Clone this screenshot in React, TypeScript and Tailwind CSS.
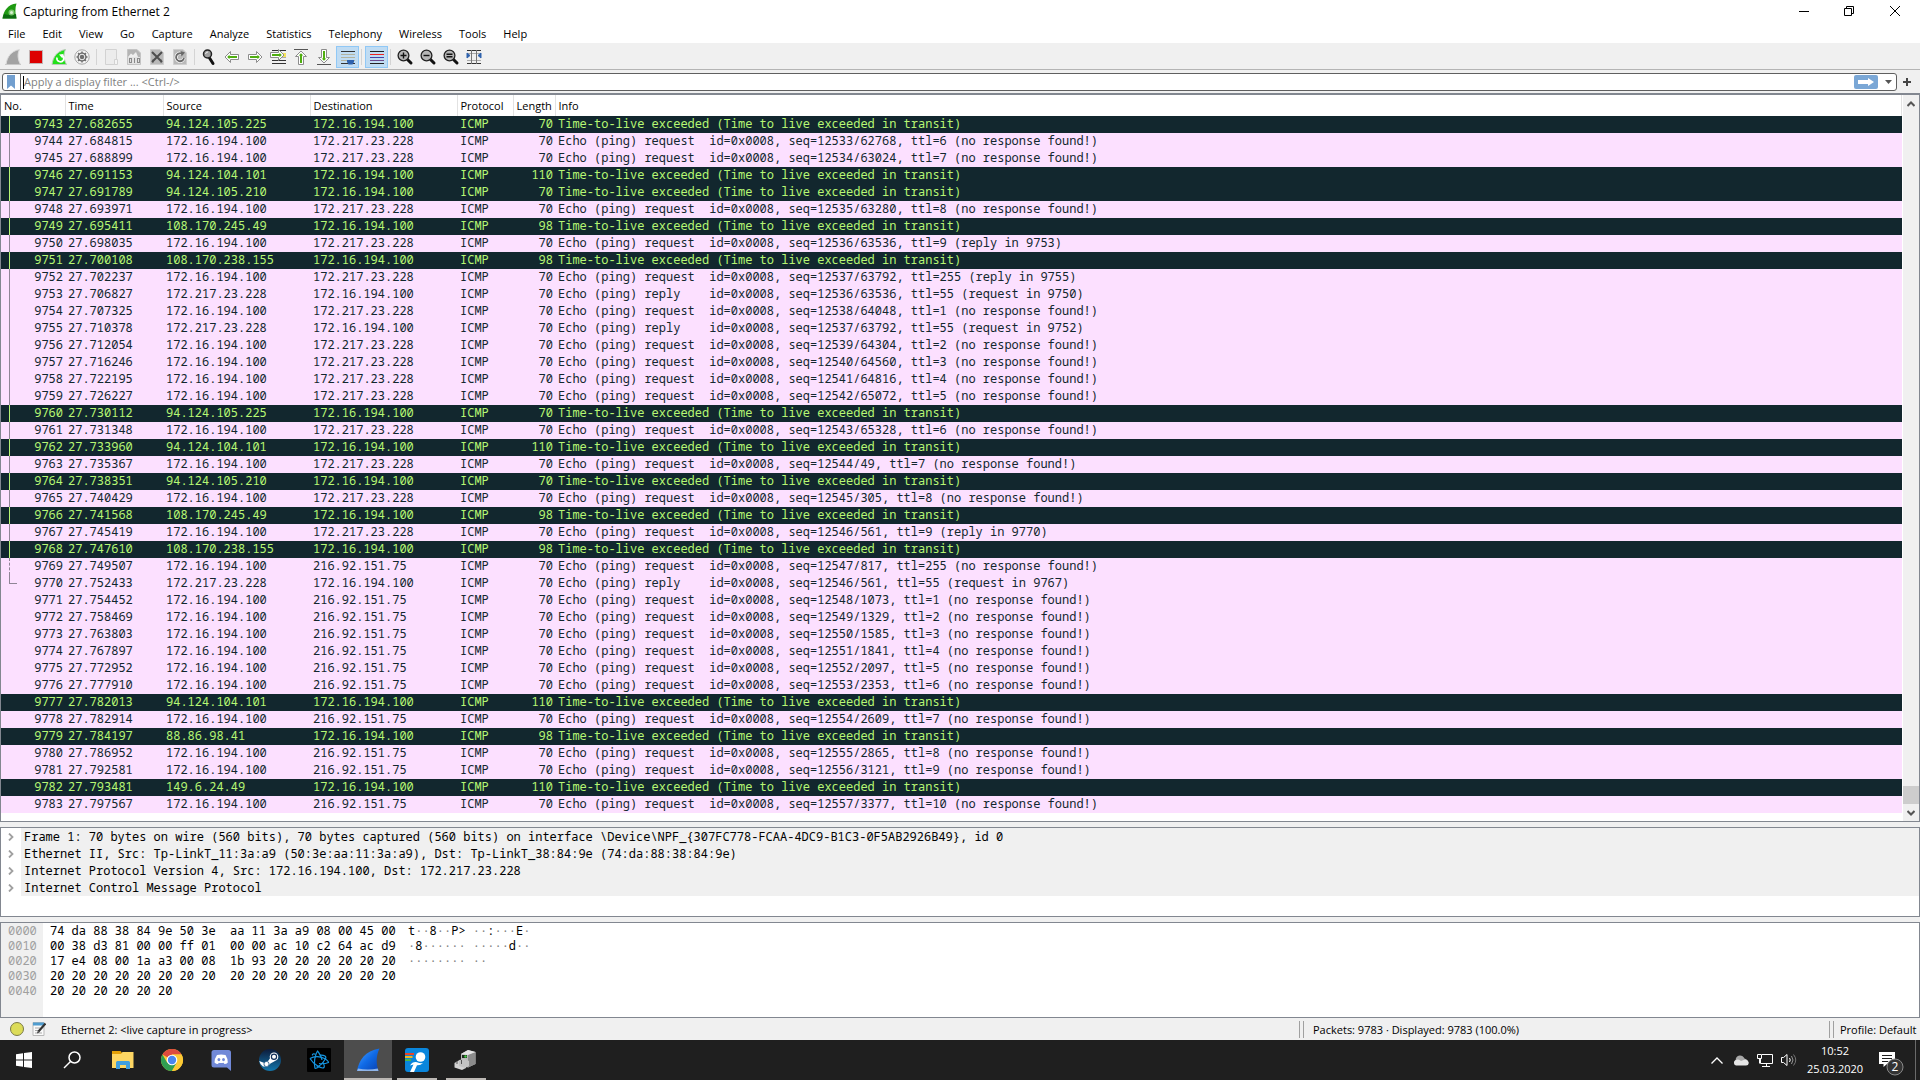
import type { ReactNode } from "react";

type Packet = {
  no: number;
  time: string;
  src: string;
  dst: string;
  len: number;
  info: string;
};

const LOCAL = "172.16.194.100";
const GOOGLE = "172.217.23.228";
const REMOTE = "216.92.151.75";

const expired = (no: number, time: string, src: string, len: number): Packet => ({
  no,
  time,
  src,
  dst: LOCAL,
  len,
  info: "Time-to-live exceeded (Time to live exceeded in transit)",
});

const request = (
  no: number,
  time: string,
  dst: string,
  seq: string,
  ttl: number,
  note = "no response found!",
): Packet => ({
  no,
  time,
  src: LOCAL,
  dst,
  len: 70,
  info: `Echo (ping) request  id=0x0008, seq=${seq}, ttl=${ttl} (${note})`,
});

const reply = (no: number, time: string, seq: string, to: number): Packet => ({
  no,
  time,
  src: GOOGLE,
  dst: LOCAL,
  len: 70,
  info: `Echo (ping) reply    id=0x0008, seq=${seq}, ttl=55 (request in ${to})`,
});

const packets: Packet[] = [
  expired(9743, "27.682655", "94.124.105.225", 70),
  request(9744, "27.684815", GOOGLE, "12533/62768", 6),
  request(9745, "27.688899", GOOGLE, "12534/63024", 7),
  expired(9746, "27.691153", "94.124.104.101", 110),
  expired(9747, "27.691789", "94.124.105.210", 70),
  request(9748, "27.693971", GOOGLE, "12535/63280", 8),
  expired(9749, "27.695411", "108.170.245.49", 98),
  request(9750, "27.698035", GOOGLE, "12536/63536", 9, "reply in 9753"),
  expired(9751, "27.700108", "108.170.238.155", 98),
  request(9752, "27.702237", GOOGLE, "12537/63792", 255, "reply in 9755"),
  reply(9753, "27.706827", "12536/63536", 9750),
  request(9754, "27.707325", GOOGLE, "12538/64048", 1),
  reply(9755, "27.710378", "12537/63792", 9752),
  request(9756, "27.712054", GOOGLE, "12539/64304", 2),
  request(9757, "27.716246", GOOGLE, "12540/64560", 3),
  request(9758, "27.722195", GOOGLE, "12541/64816", 4),
  request(9759, "27.726227", GOOGLE, "12542/65072", 5),
  expired(9760, "27.730112", "94.124.105.225", 70),
  request(9761, "27.731348", GOOGLE, "12543/65328", 6),
  expired(9762, "27.733960", "94.124.104.101", 110),
  request(9763, "27.735367", GOOGLE, "12544/49", 7),
  expired(9764, "27.738351", "94.124.105.210", 70),
  request(9765, "27.740429", GOOGLE, "12545/305", 8),
  expired(9766, "27.741568", "108.170.245.49", 98),
  request(9767, "27.745419", GOOGLE, "12546/561", 9, "reply in 9770"),
  expired(9768, "27.747610", "108.170.238.155", 98),
  request(9769, "27.749507", REMOTE, "12547/817", 255),
  reply(9770, "27.752433", "12546/561", 9767),
  request(9771, "27.754452", REMOTE, "12548/1073", 1),
  request(9772, "27.758469", REMOTE, "12549/1329", 2),
  request(9773, "27.763803", REMOTE, "12550/1585", 3),
  request(9774, "27.767897", REMOTE, "12551/1841", 4),
  request(9775, "27.772952", REMOTE, "12552/2097", 5),
  request(9776, "27.777910", REMOTE, "12553/2353", 6),
  expired(9777, "27.782013", "94.124.104.101", 110),
  request(9778, "27.782914", REMOTE, "12554/2609", 7),
  expired(9779, "27.784197", "88.86.98.41", 98),
  request(9780, "27.786952", REMOTE, "12555/2865", 8),
  request(9781, "27.792581", REMOTE, "12556/3121", 9),
  expired(9782, "27.793481", "149.6.24.49", 110),
  request(9783, "27.797567", REMOTE, "12557/3377", 10),
];

const menus = [
  "File", "Edit", "View", "Go", "Capture", "Analyze",
  "Statistics", "Telephony", "Wireless", "Tools", "Help",
];

const details = [
  "Frame 1: 70 bytes on wire (560 bits), 70 bytes captured (560 bits) on interface \\Device\\NPF_{307FC778-FCAA-4DC9-B1C3-0F5AB2926B49}, id 0",
  "Ethernet II, Src: Tp-LinkT_11:3a:a9 (50:3e:aa:11:3a:a9), Dst: Tp-LinkT_38:84:9e (74:da:88:38:84:9e)",
  "Internet Protocol Version 4, Src: 172.16.194.100, Dst: 172.217.23.228",
  "Internet Control Message Protocol",
];

const hexRows = [
  ["0000", "74 da 88 38 84 9e 50 3e  aa 11 3a a9 08 00 45 00", "t··8··P> ··:···E·"],
  ["0010", "00 38 d3 81 00 00 ff 01  00 00 ac 10 c2 64 ac d9", "·8······ ·····d··"],
  ["0020", "17 e4 08 00 1a a3 00 08  1b 93 20 20 20 20 20 20", "········ ··"],
  ["0030", "20 20 20 20 20 20 20 20  20 20 20 20 20 20 20 20", ""],
  ["0040", "20 20 20 20 20 20", ""],
];

/* ---------- toolbar icons ---------- */

const Icon = ({ children }: { children: ReactNode }) => (
  <svg viewBox="0 0 17 16" className="h-4 w-[17px] shrink-0 overflow-visible" fill="none" aria-hidden="true">
    {children}
  </svg>
);

const FIN = "M1 15.5C2 8 6 2 14.5.5C12 5 13 11 15.5 15.5Z";

const AppIcon = () => (
  <svg viewBox="0 0 16 16" className="size-4" aria-hidden="true">
    <path d="M.5 15.5C1.500 8 6 1 14.500.5C13 5 13 11 14.500 15.500Z" fill="#1f9a12" />
    <path d="M.5 15.500L2 11Q8 13 14 11L14.500 15.500Z" fill="#0c6c10" />
    <circle cx="9.500" cy="9.500" r="3" fill="#7cc76f" />
    <circle cx="9.500" cy="9.500" r="1.500" fill="#d9f2d3" />
  </svg>
);

const FinGray = () => (
  <Icon>
    <path d={FIN} fill="#a3a3a3" stroke="#dcdcdc" />
    <path d="M0 15.500H16" stroke="#c8c8c8" />
  </Icon>
);
const Stop = () => (
  <Icon>
    <rect x="1.500" y="1.500" width="13" height="13" fill="#dd0000" stroke="#c4b4b4" />
  </Icon>
);
const FinRestart = () => (
  <Icon>
    <path d={FIN} fill="#22e01a" stroke="#b9c9b9" />
    <path d="M11.500 6.500A3.500 3.500 0 1 1 6 8.500" stroke="#fff" strokeWidth="1.600" />
    <path d="M8 5.500L12.500 5L11.500 9.500Z" fill="#fff" />
  </Icon>
);
const Gear = () => (
  <Icon>
    <circle cx="8" cy="8" r="7.200" fill="#f4f4f4" stroke="#a8a8a8" />
    <circle cx="8" cy="8" r="4.600" fill="#6f6f6f" />
    <path d="M8 2.500V13.500M2.500 8H13.500M4.100 4.100L11.900 11.900M11.900 4.100L4.100 11.900" stroke="#6f6f6f" strokeWidth="1.500" />
    <circle cx="8" cy="8" r="2.800" stroke="#f4f4f4" />
  </Icon>
);
const FileBlank = () => (
  <Icon>
    <path d="M2.500.5H13.500V10.500V15.500H2.500Z" fill="#ececec" stroke="#d2d2d2" />
    <path d="M11.500 10.500H14.500V15.500H11.500Z" fill="#f4f4f4" stroke="#d2d2d2" />
  </Icon>
);
const FileSave = () => (
  <Icon>
    <path d="M1.500.5H11L14.500 4V15.500H1.500Z" fill="#b4b4b4" stroke="#c4c4c4" />
    <path d="M2 8L5 4.500L7 6L10 3L12 8Z" fill="#eee" />
    <rect x="2" y="8" width="12" height="7" fill="#e2e2e2" />
    <rect x="3.500" y="9.500" width="2" height="4" stroke="#8a8a8a" />
    <path d="M8.500 9V14" stroke="#8a8a8a" />
    <rect x="11.500" y="9.500" width="2" height="4" stroke="#8a8a8a" />
  </Icon>
);
const FileClose = () => (
  <Icon>
    <path d="M1.500.5H11L14.500 4V15.500H1.500Z" fill="#b9b9b9" stroke="#cfcfcf" />
    <path d="M3 10h2v4H3zM11 10h2v4h-2z" fill="#9a9a9a" />
    <path d="M3 3L13 13M13 3L3 13" stroke="#4e4e4e" strokeWidth="2" />
  </Icon>
);
const FileReload = () => (
  <Icon>
    <path d="M1.500.5H11L14.500 4V15.500H1.500Z" fill="#b9b9b9" stroke="#cfcfcf" />
    <path d="M12 9A4 4 0 1 1 9.500 4.500" stroke="#fff" strokeWidth="3.200" />
    <path d="M12 9A4 4 0 1 1 9.500 4.500" stroke="#696969" strokeWidth="1.800" />
    <path d="M8.500 2L13 3.500L9.500 7.500Z" fill="#696969" />
  </Icon>
);
const Find = () => (
  <Icon>
    <path d="M8.500 9L12 14.500" stroke="#111" strokeWidth="3" strokeLinecap="round" />
    <circle cx="6.500" cy="5" r="4" fill="#9f9f9f" stroke="#222" strokeWidth="1.500" />
    <path d="M4.500 5A2.500 2.500 0 0 1 7 3" stroke="#eee" />
  </Icon>
);
const Arrow = ({ transform }: { transform?: string }) => (
  <g transform={transform}>
    <path d="M1 8L6.500 2.500V5.500H14.500V10.500H6.500V13.500Z" fill="#fff" stroke="#8c8c8c" strokeLinejoin="round" />
    <path d="M3.200 8L5.500 5.700V7H13V9H5.500V10.300Z" fill="#4fae10" />
  </g>
);
const GoBack = () => (
  <Icon>
    <Arrow />
  </Icon>
);
const GoForward = () => (
  <Icon>
    <Arrow transform="rotate(180 8 8)" />
  </Icon>
);
const GoTo = () => (
  <Icon>
    <path d="M2 1.500H16M2 11.500H16M2 14.500H16" stroke="#333" />
    <rect x="13" y="4" width="3" height="4" fill="#f6e45c" />
    <path d="M2 8.500H16" stroke="#aaa" />
    <g transform="translate(-1 -2)">
      <Arrow transform="rotate(180 8 8)" />
    </g>
  </Icon>
);
const GoTop = () => (
  <Icon>
    <path d="M1 .5H15" stroke="#555" />
    <Arrow transform="translate(0 1) rotate(90 8 8)" />
  </Icon>
);
const GoBottom = () => (
  <Icon>
    <path d="M1 15.500H15" stroke="#555" />
    <Arrow transform="translate(0 -1) rotate(-90 8 8)" />
  </Icon>
);
const AutoScroll = () => (
  <Icon>
    <g transform="translate(1 0)">
      <path d="M1 2.500H15" stroke="#333" />
      <path d="M1 5.500H15M1 8.500H15M1 11.500H15" stroke="#b3b39f" />
      <path d="M1 14.500H15" stroke="#333" />
      <path d="M7 11H14V13L12.500 15.500H8.500L7 13Z" fill="#2f62ad" />
    </g>
  </Icon>
);
const Colorize = () => (
  <Icon>
    <g transform="translate(1 0)">
      <path d="M1 2.500H15" stroke="#222" />
      <path d="M1 5.500H15" stroke="#ee2222" />
      <path d="M1 8.500H15" stroke="#4343a8" />
      <path d="M1 11.500H15" stroke="#6b4a8e" />
      <path d="M1 14.500H15" stroke="#222" />
    </g>
  </Icon>
);
const Zoom = ({ mark }: { mark: string }) => (
  <Icon>
    <path d="M10.500 10.500L14 14" stroke="#111" strokeWidth="3" strokeLinecap="round" />
    <circle cx="6.500" cy="6.500" r="5.400" fill="#b5b5b5" stroke="#222" strokeWidth="1.300" />
    <path d={mark} stroke="#111" strokeWidth="1.400" />
  </Icon>
);
const ResizeColumns = () => (
  <Icon>
    <path d="M1 1.500H15M1 14.500H15" stroke="#333" />
    <path d="M1 4.500H15M1 11.500H15" stroke="#aaa" />
    <path d="M5.500 1V15M10.500 1V15" stroke="#777" />
    <path d="M1 4L4 6.500L1 9ZM15 4L12 6.500L15 9Z" fill="#2f62ad" stroke="#2f62ad" />
  </Icon>
);

type Tool = { label: string; icon: ReactNode; on?: boolean };

const toolGroups: Tool[][] = [
  [
    { label: "Start capturing packets", icon: <FinGray /> },
    { label: "Stop capturing packets", icon: <Stop /> },
    { label: "Restart current capture", icon: <FinRestart /> },
    { label: "Capture options", icon: <Gear /> },
  ],
  [
    { label: "Open a capture file", icon: <FileBlank /> },
    { label: "Save this capture file", icon: <FileSave /> },
    { label: "Close this capture file", icon: <FileClose /> },
    { label: "Reload this file", icon: <FileReload /> },
  ],
  [
    { label: "Find a packet", icon: <Find /> },
    { label: "Go back", icon: <GoBack /> },
    { label: "Go forward", icon: <GoForward /> },
    { label: "Go to packet", icon: <GoTo /> },
    { label: "Go to the first packet", icon: <GoTop /> },
    { label: "Go to the last packet", icon: <GoBottom /> },
    { label: "Auto scroll", icon: <AutoScroll />, on: true },
  ],
  [{ label: "Colorize packet list", icon: <Colorize />, on: true }],
  [
    { label: "Zoom in", icon: <Zoom mark="M3.500 6.500H9.500M6.500 3.500V9.500" /> },
    { label: "Zoom out", icon: <Zoom mark="M3.500 6.500H9.500" /> },
    { label: "Normal size", icon: <Zoom mark="M3.500 5.200H9.500M3.500 7.800H9.500" /> },
    { label: "Resize columns", icon: <ResizeColumns /> },
  ],
];

/* ---------- taskbar icons ---------- */

const Pic = ({ children }: { children: ReactNode }) => (
  <svg viewBox="0 0 24 24" className="size-6 overflow-visible" fill="none" aria-hidden="true">
    {children}
  </svg>
);

const WindowsLogo = () => (
  <Pic>
    <path d="M4 6.300L11 5.300V11.500H4ZM12 5.100L20 4V11.500H12ZM4 12.500H11V18.700L4 17.700ZM12 12.500H20V20L12 18.900Z" fill="#fff" />
  </Pic>
);
const Search = () => (
  <Pic>
    <circle cx="14.500" cy="9.500" r="5.500" stroke="#fff" strokeWidth="1.500" />
    <path d="M10.500 13.500L4 20" stroke="#fff" strokeWidth="1.500" />
  </Pic>
);
const Explorer = () => (
  <Pic>
    <path d="M1 3H9.500L11 5H22V12H1Z" fill="#e3a008" />
    <path d="M1 6H10L11.500 4H22.500V20H1Z" fill="#fdd663" />
    <path d="M5 21V14.500Q5 13 6.500 13H17.500Q19 13 19 14.500V21H15V17H9V21Z" fill="#3f9fe0" />
  </Pic>
);
const Chrome = () => (
  <Pic>
    <circle cx="12" cy="12" r="11" fill="#fcc934" />
    <path d="M12 12L2.470 6.500A11 11 0 0 1 21.530 6.500H12Z" fill="#dd4b3e" />
    <path d="M2.470 6.500A11 11 0 0 0 12 23L16.760 14.750L12 12L7.240 14.750Z" fill="#2f9e52" />
    <path d="M12 12V6.500H21.530A11 11 0 0 1 12 23L16.760 14.750Z" fill="#fcc934" />
    <circle cx="12" cy="12" r="5.300" fill="#fff" />
    <circle cx="12" cy="12" r="4.200" fill="#4a86ee" />
  </Pic>
);
const Discord = () => (
  <Pic>
    <path d="M5 2H19.500Q22 2 22 4.500V23L18 19.500H5Q2.500 19.500 2.500 17V4.500Q2.500 2 5 2Z" fill="#7189d8" />
    <path d="M8 7Q12 6 16.500 7Q18.800 10.500 18.800 14.500Q17.500 16 15.500 16L14.600 14.800Q12 15.300 9.800 14.800L9 16Q7 16 5.500 14.500Q5.500 10.500 8 7Z" fill="#fff" />
    <ellipse cx="9.900" cy="11.600" rx="1.400" ry="1.600" fill="#7189d8" />
    <ellipse cx="14.500" cy="11.600" rx="1.400" ry="1.600" fill="#7189d8" />
  </Pic>
);
const Steam = () => (
  <Pic>
    <defs>
      <linearGradient id="steam" x1="0" y1="0" x2="0" y2="1">
        <stop offset="0" stopColor="#0d1b3a" />
        <stop offset="1" stopColor="#1377ac" />
      </linearGradient>
    </defs>
    <circle cx="12" cy="12" r="11" fill="url(#steam)" />
    <path d="M1.200 13L7 15.200L10.500 12.500L12.500 9.500L17 13L12.500 15.500L9.500 18.500L5 18.500Q2 16.500 1.200 13Z" fill="#fff" />
    <circle cx="8.500" cy="16" r="2.600" fill="#fff" stroke="#17517f" strokeWidth=".8" />
    <circle cx="16" cy="8.800" r="4.300" fill="#fff" />
    <circle cx="16" cy="8.800" r="2.600" fill="#fff" stroke="#12305a" strokeWidth="1.200" />
  </Pic>
);
const BattleNet = () => (
  <Pic>
    <rect width="24" height="24" rx="1" fill="#000" />
    <g stroke="#1695e0" strokeWidth="1.200" strokeLinejoin="round">
      <path d="M8 20.500C6.500 15 8 6.500 10.500 3C12 4.500 14.500 9.500 15 12" />
      <path d="M9.500 19C12 18.500 15.500 15.500 18 11.500C20.500 8 17 7 13 7.200" />
      <path d="M3 10.500C7 7.800 13 8 17.500 10.500C20 12 21.500 13.500 21.500 14.500C19 15.500 15 16 12 15.500" />
      <path d="M3 10.500C4.500 13 7 15.500 10 17.500C13 19.500 16 20.500 17 19.500C17.800 18.500 17 16.500 16 14.500" />
      <path d="M8 20.500C9.500 20.500 11 19.500 12.500 18.500M5.500 7.500C5 5.800 6.500 5.500 8.500 6.200" />
    </g>
  </Pic>
);
const Wireshark = () => (
  <Pic>
    <defs>
      <linearGradient id="fin" x1="0" y1="0" x2="1" y2="1">
        <stop offset="0" stopColor="#4aa3ff" />
        <stop offset=".5" stopColor="#0f6ae6" />
        <stop offset="1" stopColor="#0a3fae" />
      </linearGradient>
    </defs>
    <path d="M1 23C3 12 9 3 23.500.5C20 8 20 15 22.500 23Z" fill="url(#fin)" />
    <path d="M1 23L2 20.500Q12 22.500 21.800 20.500L22.500 23Z" fill="#8fb4e8" />
  </Pic>
);
const PingPlotter = () => (
  <Pic>
    <rect width="24" height="24" rx="3" fill="#0a86dc" />
    <path d="M0 5H9V7H0Z" fill="#e8452c" />
    <path d="M0 8H7.500V10H0Z" fill="#f3b51b" />
    <path d="M0 11H6V13H0Z" fill="#4bb749" />
    <circle cx="15.500" cy="9" r="4.800" fill="#fff" />
    <path d="M5 17.500Q7.500 13.500 12 14.200Q15 15.500 18 15Q15.500 17.500 12 17.200L9 24H5L8.500 16.500Z" fill="#fff" />
  </Pic>
);
const Device = () => (
  <Pic>
    <path d="M7 6L14 2L21.500 4V16L14 19.500L7 17Z" fill="#b9b9b9" />
    <path d="M14 6.500L21.500 4V16L14 19.500Z" fill="#8b8b8b" />
    <path d="M7 6L14 2L21.500 4L14 7Z" fill="#e4e4e4" />
    <path d="M8 7H13V10H8Z" fill="#1f2a1f" />
    <circle cx="11.500" cy="8.500" r="1.200" fill="#3fd03f" />
    <path d="M.5 15L4.500 12.500L12 15V20L8 22L.5 19.500Z" fill="#d2d2d2" />
    <path d="M5 12L10.500 11L15 13V18L11 20L5 18Z" fill="#c2c2c2" />
    <path d="M3 13V16M7.500 12V16" stroke="#555" />
  </Pic>
);

const apps: { label: string; icon: ReactNode; state?: "open" | "active" }[] = [
  { label: "File Explorer", icon: <Explorer /> },
  { label: "Google Chrome", icon: <Chrome /> },
  { label: "Discord", icon: <Discord /> },
  { label: "Steam", icon: <Steam /> },
  { label: "Battle.net", icon: <BattleNet /> },
  { label: "Wireshark", icon: <Wireshark />, state: "active" },
  { label: "PingPlotter", icon: <PingPlotter />, state: "open" },
  { label: "Device manager", icon: <Device />, state: "open" },
];

/* ---------- window parts ---------- */

function TitleBar() {
  return (
    <header className="flex h-[22px] items-center bg-white pr-[2px] pl-[2px] text-[12px]">
      <AppIcon />
      <h1 className="ml-[5px] flex-1 pt-px">Capturing from Ethernet 2</h1>
      <button type="button" aria-label="Minimize" className="flex h-5 w-[45px] items-center justify-center">
        <svg viewBox="0 0 10 10" className="size-[10px]" stroke="#000" fill="none"><path d="M0 5.500H10" /></svg>
      </button>
      <button type="button" aria-label="Restore" className="flex h-5 w-[45px] items-center justify-center">
        <svg viewBox="0 0 10 10" className="size-[10px]" stroke="#000" fill="none"><path d="M.5 2.500H7.500V9.500H.5ZM2.500 2.500V.5H9.500V7.500H7.500" /></svg>
      </button>
      <button type="button" aria-label="Close" className="flex h-5 w-[47px] items-center justify-center">
        <svg viewBox="0 0 10 10" className="size-[10px]" stroke="#000" fill="none"><path d="M0 0L10 10M10 0L0 10" /></svg>
      </button>
    </header>
  );
}

function MenuBar() {
  return (
    <nav className="flex h-[22px] items-center gap-px border-b border-[#f0f0f0] bg-white pt-[3px] text-[11px]">
      {menus.map((m) => (
        <button key={m} type="button" className="px-2">{m}</button>
      ))}
    </nav>
  );
}

function ToolBar() {
  return (
    <div role="toolbar" className="mt-px flex h-[25px] items-center border-b border-[#b4b4b4] bg-[#f0f0f0] pl-[2px]">
      {toolGroups.map((group, i) => (
        <div key={i} className="flex items-center">
          {i > 0 && <span className="mx-[2px] h-4 w-[2px] border-l border-[#d4d4d4]" />}
          {group.map((t) => (
            <button
              key={t.label}
              type="button"
              aria-label={t.label}
              className={
                t.on
                  ? "flex h-[22px] w-[23px] items-center justify-center border border-[#90c8f6] bg-[#c0dcf3]"
                  : "flex h-[22px] w-[23px] items-center justify-center"
              }
            >
              {t.icon}
            </button>
          ))}
        </div>
      ))}
    </div>
  );
}

function FilterBar() {
  return (
    <div className="mt-px flex items-center bg-[#f0f0f0] pt-[2px] pb-[2px] pl-[2px]">
      <div className="flex h-[18px] flex-1 items-center rounded-[3px] border border-[#5f5f5f] bg-white">
        <button type="button" aria-label="Manage saved filters" className="flex h-4 w-[18px] items-center justify-center border-r border-[#5f5f5f] pr-px">
          <svg viewBox="0 0 8 14" className="h-[14px] w-2" fill="#729fcf"><path d="M0 0H8V14L4 10.500L0 14Z" /></svg>
        </button>
        <span className="ml-[2px] h-[13px] w-px bg-black" />
        <input
          type="text"
          aria-label="Display filter"
          placeholder="Apply a display filter ... <Ctrl-/>"
          className="h-4 min-w-0 flex-1 bg-transparent pt-px text-[11px] outline-none placeholder:text-[#808080]"
        />
        <button type="button" aria-label="Apply filter" className="flex h-[14px] w-6 items-center justify-center rounded-[2px] bg-[#7aa7d6]">
          <svg viewBox="0 0 16 8" className="h-2 w-4" fill="#fff"><path d="M0 2H10V0L16 4L10 8V6H0Z" /></svg>
        </button>
        <button type="button" aria-label="Recent filters" className="flex h-4 w-[18px] items-center justify-center pl-[2px]">
          <svg viewBox="0 0 7 4" className="h-1 w-[7px]" fill="#555"><path d="M0 0H7L3.500 4Z" /></svg>
        </button>
      </div>
      <button type="button" aria-label="Add filter button" className="flex h-[18px] w-[23px] items-center justify-center pr-[3px]">
        <svg viewBox="0 0 8 8" className="size-2" stroke="#444" strokeWidth="2"><path d="M4 0V8M0 4H8" /></svg>
      </button>
    </div>
  );
}

function Related({ no, dark }: { no: number; dark: boolean }) {
  if (no > 9770) return <span />;
  if (no === 9770)
    return <span className="h-[9px] w-2 border-b border-l border-[#8f8596]" />;
  if (no === 9769)
    return <span className="h-[17px] w-2 border-l border-dashed border-[#8f8596]" />;
  return (
    <span className={dark ? "h-[17px] w-2 border-l border-[#b7f774]" : "h-[17px] w-2 border-l border-[#8f8596]"} />
  );
}

function PacketList() {
  const head = "border-r border-[#e2e2e2] pt-[2px] pl-[3px] text-left font-normal";
  return (
    <section aria-label="Packet list" className="flex border border-t-2 border-[#828790] bg-white">
      <div className="min-w-0 flex-1 pb-2">
        <table className="w-full table-fixed border-collapse">
          <colgroup>
            <col className="w-16" />
            <col className="w-[98px]" />
            <col className="w-[147px]" />
            <col className="w-[147px]" />
            <col className="w-14" />
            <col className="w-[42px]" />
            <col />
          </colgroup>
          <thead>
            <tr className="h-[21px] text-[11px]">
              <th className={head}>No.</th>
              <th className={head}>Time</th>
              <th className={head}>Source</th>
              <th className={head}>Destination</th>
              <th className={head}>Protocol</th>
              <th className={head}>Length</th>
              <th className={head}>Info</th>
            </tr>
          </thead>
          <tbody className="align-top font-['Noto_Sans_Mono','Liberation_Mono',monospace] text-[12px] leading-[15px] whitespace-pre">
            {packets.map((p) => {
              const dark = p.info.startsWith("Time");
              return (
                <tr key={p.no} className={dark ? "h-[17px] bg-[#12272e] text-[#b7f774]" : "h-[17px] bg-[#fce0ff] text-[#12272e]"}>
                  <td className="p-0 pr-[2px] pl-2 align-top">
                    <div className="flex h-[17px] items-start justify-between">
                      <Related no={p.no} dark={dark} />
                      <span>{p.no}</span>
                    </div>
                  </td>
                  <td className="p-0 pl-[3px] align-top">{p.time}</td>
                  <td className="p-0 pl-[3px] align-top">{p.src}</td>
                  <td className="p-0 pl-[3px] align-top">{p.dst}</td>
                  <td className="p-0 pl-[3px] align-top">ICMP</td>
                  <td className="p-0 pr-[2px] text-right align-top">{p.len}</td>
                  <td className="p-0 pl-[3px] align-top">{p.info}</td>
                </tr>
              );
            })}
          </tbody>
        </table>
      </div>
      <div className="ml-px flex w-4 flex-col bg-[#f0f0f0]">
        <button type="button" aria-label="Scroll up" className="flex h-[18px] items-center justify-center">
          <svg viewBox="0 0 8 6" className="h-[6px] w-2" fill="none" stroke="#555" strokeWidth="2"><path d="M.5 5L4 1.500L7.500 5" /></svg>
        </button>
        <div className="flex-1" />
        <div className="h-[18px] bg-[#cdcdcd]" />
        <button type="button" aria-label="Scroll down" className="flex h-[17px] items-center justify-center">
          <svg viewBox="0 0 8 6" className="h-[6px] w-2" fill="none" stroke="#555" strokeWidth="2"><path d="M.5 1L4 4.500L7.500 1" /></svg>
        </button>
      </div>
    </section>
  );
}

function PacketDetails() {
  return (
    <section aria-label="Packet details" className="mt-[5px] border border-[#828790] bg-white pb-5">
      <ul className="font-['Noto_Sans_Mono','Liberation_Mono',monospace] text-[12px] leading-[17px]">
        {details.map((d) => (
          <li key={d} className="flex h-[17px] items-center">
            <button type="button" aria-label="Expand" className="flex w-5 items-center justify-center">
              <svg viewBox="0 0 6 8" className="h-2 w-[6px]" fill="none" stroke="#a0a0a0" strokeWidth="1.800"><path d="M1 .5L4.500 4L1 7.500" /></svg>
            </button>
            <span className="flex-1 bg-[#f0f0f0] pl-[3px]">{d}</span>
          </li>
        ))}
      </ul>
    </section>
  );
}

function PacketBytes() {
  return (
    <section aria-label="Packet bytes" className="mt-[5px] flex flex-1 border border-[#828790] bg-[linear-gradient(to_right,#f0f0f0_42px,#ffffff_42px)]">
      <table className="h-[75px] border-collapse font-['Noto_Sans_Mono','Liberation_Mono',monospace] text-[12px] leading-[15px] whitespace-pre">
        <tbody>
          {hexRows.map(([offset, hex, ascii]) => (
            <tr key={offset} className="h-[15px]">
              <td className="w-[49px] p-0 pl-[7px] text-[#a0a0a0]">{offset}</td>
              <td className="w-[358px] p-0">{hex}</td>
              <td className="p-0">
                {ascii.split("").map((c, i) => (
                  <span key={i} className={c === "·" ? "text-[#808080]" : "text-black"}>{c}</span>
                ))}
              </td>
            </tr>
          ))}
        </tbody>
      </table>
    </section>
  );
}

const Grip = () => <span className="h-[17px] w-[5px] shrink-0 border-x border-[#a0a0a0]" />;

function StatusBar() {
  return (
    <footer className="flex h-[22px] items-center bg-[#f0f0f0] pr-1 text-[11px]">
      <button type="button" aria-label="Expert information" className="ml-[10px] size-[14px] rounded-full border border-[#7a7a46] bg-[#dcdc58]" />
      <button type="button" aria-label="Capture file comment" className="ml-2">
        <svg viewBox="0 0 14 14" className="size-[14px]" fill="none">
          <path d="M1 .5H12V13.500H1Z" fill="#fafafa" stroke="#b9b9b9" />
          <path d="M1 .5H12V3.500H1Z" fill="#4f9ccf" />
          <path d="M3 6H8M3 8.500H7M3 11H10" stroke="#aaa" />
          <path d="M13.500 1.500L6.500 9.500" stroke="#333" strokeWidth="2.200" />
          <path d="M5 11.500L5.800 8.800L7.500 10.300Z" fill="#333" />
        </svg>
      </button>
      <p className="ml-[15px] flex-1 pt-[2px]">Ethernet 2: &lt;live capture in progress&gt;</p>
      <Grip />
      <p className="ml-[9px] w-[516px] pt-[2px]">Packets: 9783 · Displayed: 9783 (100.0%)</p>
      <Grip />
      <button type="button" className="ml-[6px] w-[76px] pt-[2px] text-left whitespace-nowrap">Profile: Default</button>
    </footer>
  );
}

function TaskBar() {
  return (
    <div className="flex h-10 items-stretch bg-[#1f1f1f] text-white">
      <button type="button" aria-label="Start" className="flex w-12 items-center justify-center"><WindowsLogo /></button>
      <button type="button" aria-label="Search" className="flex w-12 items-center justify-center"><Search /></button>
      <div className="ml-[3px] flex gap-px">
        {apps.map((a) => (
          <button
            key={a.label}
            type="button"
            aria-label={a.label}
            className={a.state === "active" ? "flex w-12 flex-col items-center bg-[#4d4d4d] pt-2" : "flex w-12 flex-col items-center pt-2"}
          >
            {a.icon}
            {a.state === "active" && <span className="mt-auto h-[2px] w-full bg-[#bcb8b4]" />}
            {a.state === "open" && <span className="mt-auto h-[2px] w-10 bg-[#bcb8b4]" />}
          </button>
        ))}
      </div>
      <div className="ml-auto flex items-center">
        <button type="button" aria-label="Show hidden icons" className="flex w-6 justify-center">
          <svg viewBox="0 0 12 7" className="h-[7px] w-3" fill="none" stroke="#fff" strokeWidth="1.300"><path d="M.5 6.500L6 1L11.500 6.500" /></svg>
        </button>
        <button type="button" aria-label="OneDrive" className="flex w-6 justify-center">
          <svg viewBox="0 0 16 11" className="h-[11px] w-4">
            <path d="M3 6A4 4 0 0 1 7 .5Q10 .5 11.500 3.500Q14 4 15 6Z" fill="#a8a8a8" />
            <path d="M3 10.500A3 3 0 0 1 2.500 5Q6 3.500 8 6L12 4.500Q15.500 5 15.800 8Q15.500 10.500 13 10.500Z" fill="#e6e6e6" />
          </svg>
        </button>
        <button type="button" aria-label="Network" className="flex w-6 justify-center">
          <svg viewBox="0 0 16 13" className="h-[13px] w-4" fill="none" stroke="#fff">
            <path d="M5 .5H15.500V9.500H3.500V5M.5 .5H4.500V4.500H.5ZM2.500 4.500V9.500M9.500 9.500V12M5 12.500H13" />
          </svg>
        </button>
        <button type="button" aria-label="Volume" className="flex w-6 justify-center">
          <svg viewBox="0 0 16 14" className="h-[14px] w-4" fill="none" stroke="#fff">
            <path d="M.5 4.500H2.500L6 1.500V12.500L2.500 9.500H.5Z" />
            <path d="M8.500 5Q10 7 8.500 9" />
            <path d="M10.500 3Q13.500 7 10.500 11" stroke="#999" />
            <path d="M12.500 1.500Q17 7 12.500 12.500" stroke="#777" />
          </svg>
        </button>
        <time className="ml-[6px] w-[56px] text-center text-[11px] leading-[18px]">
          10:52
          <br />
          25.03.2020
        </time>
        <button type="button" aria-label="Notifications" className="mr-[12px] ml-4 flex h-8 w-6 pt-[7px]">
          <svg viewBox="0 0 25 25" className="size-[25px] shrink-0">
            <path d="M0 1H16V13H8L4.500 16V13H0Z" fill="#fff" />
            <path d="M3 4.500H13M3 7.500H13M3 10.500H9" stroke="#1f1f1f" />
            <circle cx="16" cy="16" r="8" fill="#333" stroke="#8a8a8a" />
            <text x="16" y="20" textAnchor="middle" fontSize="12" fill="#fff">2</text>
          </svg>
        </button>
        <button type="button" aria-label="Show desktop" className="h-10 w-[5px] border-l border-[#6a6a6a]" />
      </div>
    </div>
  );
}

export default function App() {
  return (
    <div className="flex min-h-screen flex-col bg-[#f0f0f0] font-['Open_Sans','Noto_Sans',sans-serif] text-black">
      <TitleBar />
      <MenuBar />
      <ToolBar />
      <FilterBar />
      <PacketList />
      <PacketDetails />
      <PacketBytes />
      <StatusBar />
      <TaskBar />
    </div>
  );
}
